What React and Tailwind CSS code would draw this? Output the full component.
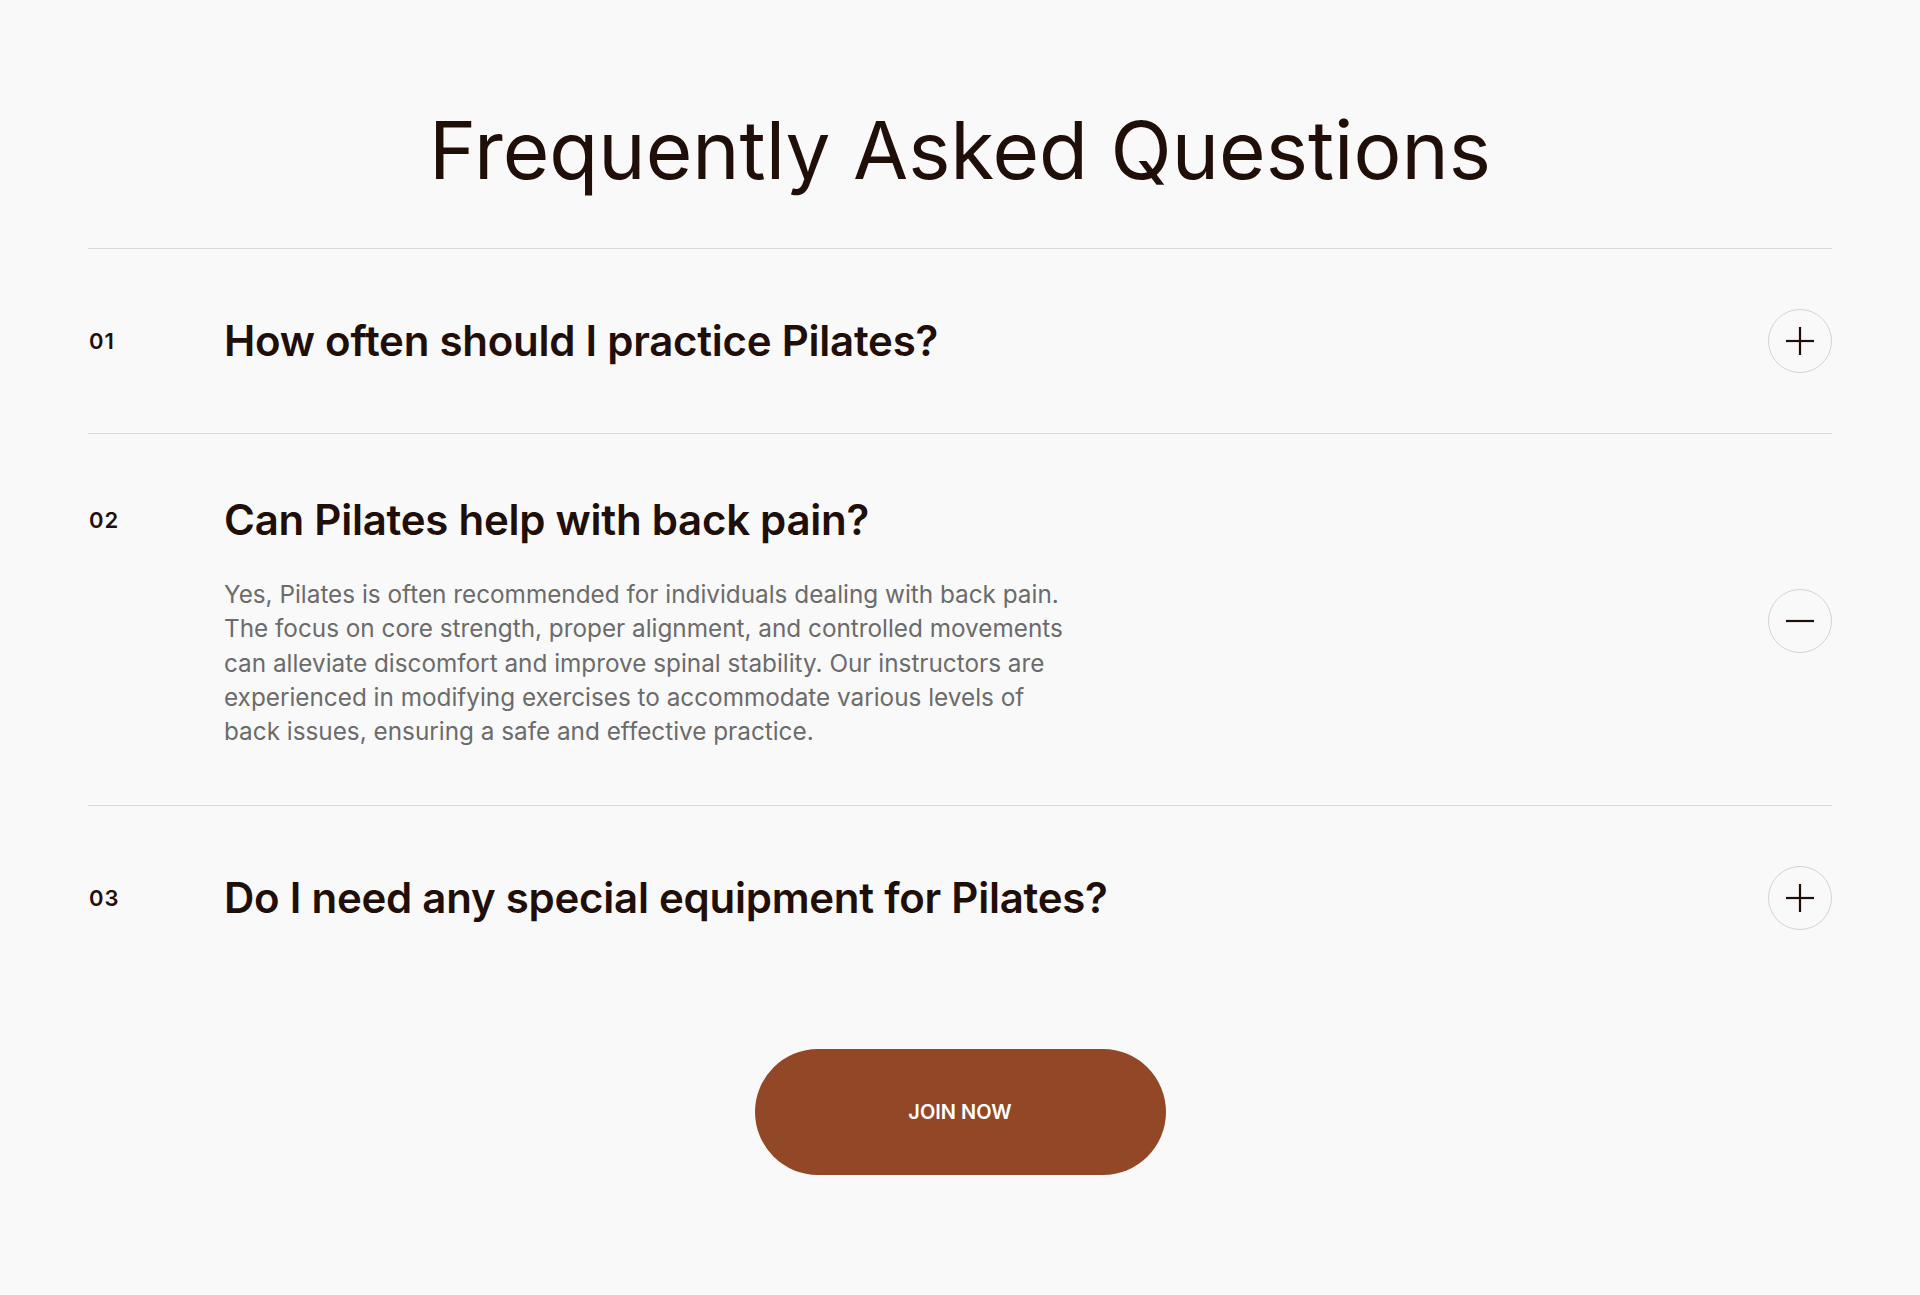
import React from "react";

const faqs = [
  { n: "01", q: "How often should I practice Pilates?", open: false },
  {
    n: "02",
    q: "Can Pilates help with back pain?",
    a: "Yes, Pilates is often recommended for individuals dealing with back pain. The focus on core strength, proper alignment, and controlled movements can alleviate discomfort and improve spinal stability. Our instructors are experienced in modifying exercises to accommodate various levels of back issues, ensuring a safe and effective practice.",
    open: true,
  },
  { n: "03", q: "Do I need any special equipment for Pilates?", open: false },
];

function Icon({ open }) {
  return (
    <svg width="30" height="30" viewBox="0 0 30 30" fill="none">
      <line x1="1" y1="15" x2="29" y2="15" stroke="#1f0f08" strokeWidth="2.2" />
      {!open && <line x1="15" y1="1" x2="15" y2="29" stroke="#1f0f08" strokeWidth="2.2" />}
    </svg>
  );
}

export default function App() {
  return (
    <div className="min-h-screen bg-[#f9f9f9] font-['Inter',sans-serif] px-[88px] pt-[110px] pb-[120px] text-[#1f0f08]">
      <h2 className="text-center text-[80px] leading-none font-normal">
        Frequently Asked Questions
      </h2>
      <div className="mt-[58px] border-t border-[#d9d9d9]">
        {faqs.map((f, i) => (
          <div
            key={f.n}
            className={`flex items-center pt-[60px] ${f.open ? "pb-[57px]" : "pb-[60px]"} ${i < faqs.length - 1 ? "border-b border-[#d9d9d9]" : ""}`}
          >
            <div className="flex flex-1 items-start">
              <div className="w-[136px] h-[52px] pl-[1px] flex items-center text-[22px] font-semibold tracking-[0.05em]">{f.n}</div>
              <div className="flex-1">
                <h3 className="text-[42px] leading-[52px] font-semibold tracking-[-0.006em]">{f.q}</h3>
                {f.open && (
                  <p className="mt-[31px] max-w-[850px] text-[24.3px] leading-[34.3px] text-[#6b6b6b]">{f.a}</p>
                )}
              </div>
            </div>
            <button className="w-[64px] h-[64px] shrink-0 rounded-full border border-[#d4d4d4] flex items-center justify-center">
              <Icon open={f.open} />
            </button>
          </div>
        ))}
      </div>
      <div className="mt-[59px] flex justify-center">
        <button className="w-[411px] h-[126px] rounded-full bg-[#924827] text-white text-[20px] font-semibold">
          JOIN NOW
        </button>
      </div>
    </div>
  );
}
